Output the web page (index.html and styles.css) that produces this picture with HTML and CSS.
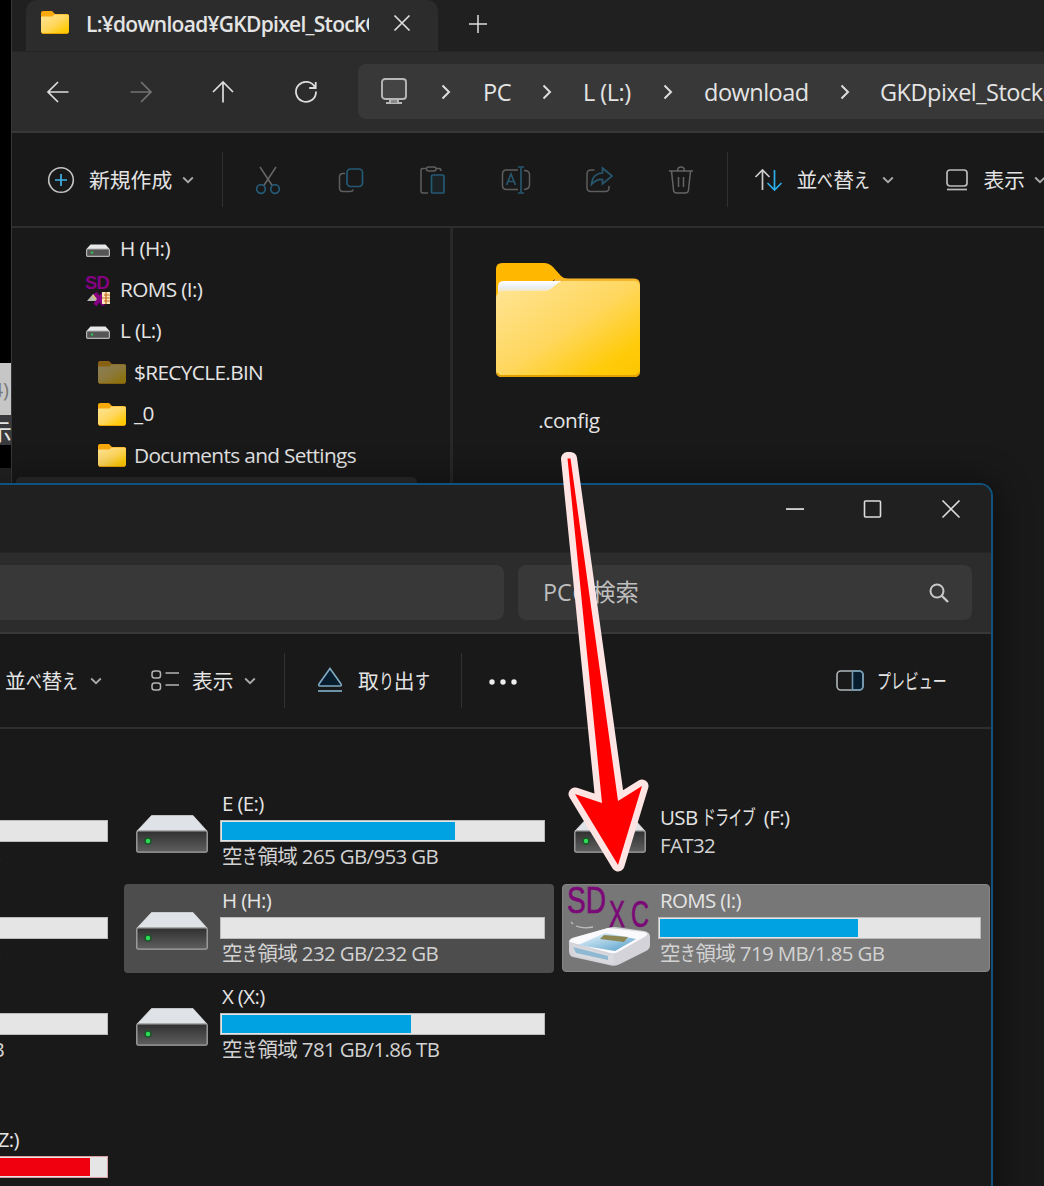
FILE: index.html
```html
<!DOCTYPE html>
<html lang="ja">
<head>
<meta charset="utf-8">
<title>エクスプローラー</title>
<link rel="stylesheet" href="styles.css">
</head>
<body>
<svg class="defs" width="0" height="0">
  <defs>
    <linearGradient id="gold" x1="0" y1="0" x2="1" y2="1"><stop offset="0" stop-color="#ffe597"/><stop offset=".5" stop-color="#ffd75e"/><stop offset=".82" stop-color="#ffcb0a"/><stop offset="1" stop-color="#fdc500"/></linearGradient>
    <linearGradient id="sheet" x1="0" y1="0" x2="0" y2="1"><stop offset="0" stop-color="#fff"/><stop offset=".45" stop-color="#e9edf3"/><stop offset="1" stop-color="#ffe597"/></linearGradient>
    <linearGradient id="metal" x1="0" y1="0" x2="0" y2="1"><stop offset="0" stop-color="#303030"/><stop offset="1" stop-color="#5f5f5f"/></linearGradient>
    <linearGradient id="glass" x1="0" y1="0" x2="1" y2="1"><stop offset="0" stop-color="#f4fbff"/><stop offset="1" stop-color="#4f9cc8"/></linearGradient>
  </defs>
  <symbol id="chevron-down" viewBox="0 0 12 8"><path d="M1.2 1.5 6 6.2l4.8-4.7" fill="none" stroke="#aaa" stroke-width="1.8"/></symbol>
  <symbol id="chevron-right" viewBox="0 0 10 16"><path d="M1.5 1.5 8 8l-6.500 6.500" fill="none" stroke="#ddd" stroke-width="2"/></symbol>
  <symbol id="folder" viewBox="0 0 28 23"><path d="M0 2q0-2 2-2h9l3 3h12q2 0 2 2v14H0z" fill="#f9a90c"/><path d="M0 6.500q0-1 1-1h10.500l2-2H26.500q1.500 0 1.500 1.500V20.500q0 2-2 2H2q-2 0-2-2z" fill="url(#gold)"/><path d="M.5 21.500q.5 1 1.500 1h24q1 0 1.500-1" stroke="#e8a200" fill="none"/></symbol>
  <symbol id="drive" viewBox="0 0 72 38"><path d="M15.500.5h41.500L71 16H1z" fill="#dfe2e6" stroke="#f2f3f4" stroke-width=".6"/><rect x=".8" y="15.800" width="70.400" height="21.400" rx="1.500" fill="url(#metal)" stroke="#a6a6a6" stroke-width="1.300"/><circle cx="12" cy="26" r="4" fill="#0b5c20" opacity=".6"/><circle cx="12" cy="26" r="2.200" fill="#2ce055"/></symbol>
  <symbol id="drive-small" viewBox="0 0 24 13"><path d="M4.500.5h15L23.500 5H.5z" fill="#e6e8ea"/><rect x=".6" y="5" width="22.800" height="7.300" rx="1" fill="#555" stroke="#b4b4b4" stroke-width="1.200"/><circle cx="6" cy="8.500" r="1.300" fill="#31bd54"/></symbol>
  <symbol id="sort" viewBox="0 0 30 24"><path d="M8.500 22V2M1.500 9l7-7 7 7" fill="none" stroke="#ccc" stroke-width="1.700"/></symbol>
</svg>

<div class="desktop">
  <aside class="behind">
    <div class="behind-light">4)</div>
    <div class="behind-dark">示</div>
    <div class="behind-foot"></div>
  </aside>

  <section class="window window-back">
    <header class="tabstrip">
      <div class="tab">
        <svg class="i-folder"><use href="#folder"/></svg>
        <span class="tab-title">L:¥download¥GKDpixel_StockOS</span>
        <svg class="tab-close" width="18" height="18"><path d="M1.500 1.500l15 15M16.500 1.500l-15 15" stroke="#ddd" stroke-width="1.700"/></svg>
      </div>
      <svg class="tab-add" width="20" height="20"><path d="M10 1v18M1 10h18" stroke="#ddd" stroke-width="1.500"/></svg>
    </header>
    <nav class="navbar">
      <div class="nav-buttons">
        <svg width="24" height="24"><path d="M22.500 12H2M12 2 2 12l10 10" fill="none" stroke="#ddd" stroke-width="1.700"/></svg>
        <svg width="24" height="24"><path d="M1.500 12H22M12 2l10 10-10 10" fill="none" stroke="#727272" stroke-width="1.700"/></svg>
        <svg width="24" height="24"><path d="M12 22.500V2M2 12 12 2l10 10" fill="none" stroke="#ddd" stroke-width="1.700"/></svg>
        <svg width="24" height="24"><path d="M21 7.500A10 10 0 1 0 22 11.500M21.700 2v6h-6.500" fill="none" stroke="#ddd" stroke-width="1.800"/></svg>
      </div>
      <div class="address">
        <svg class="monitor" width="28" height="28"><rect x="2" y="1" width="24" height="20" rx="3" fill="#444" stroke="#b8b8b8" stroke-width="1.900"/><path d="M10 21v4M18 21v4M6 25h16" stroke="#b8b8b8" stroke-width="2"/><path d="M11 22h6v3h-6z" fill="#888"/></svg>
        <svg class="crumb-sep"><use href="#chevron-right"/></svg>
        <span class="crumb crumb-pc">PC</span>
        <svg class="crumb-sep"><use href="#chevron-right"/></svg>
        <span class="crumb crumb-drive">L (L:)</span>
        <svg class="crumb-sep"><use href="#chevron-right"/></svg>
        <span class="crumb crumb-dir">download</span>
        <svg class="crumb-sep"><use href="#chevron-right"/></svg>
        <span class="crumb crumb-last">GKDpixel_StockOS</span>
      </div>
    </nav>
    <div class="toolbar">
      <svg class="new-icon" width="28" height="28"><circle cx="14" cy="14" r="12.300" fill="none" stroke="#c4c4c4" stroke-width="1.600"/><path d="M14 8v12M8 14h12" stroke="#42b3ea" stroke-width="1.700"/></svg>
      <span class="label new-label">新規作成</span>
      <svg class="caret"><use href="#chevron-down"/></svg>
      <i class="sep sep-new"></i>
      <div class="actions">
        <svg width="28" height="30"><path d="M6 2l12.500 19M22 2 9.500 21" stroke="#666" stroke-width="1.500"/><g fill="none" stroke="#245a76" stroke-width="1.700"><circle cx="7" cy="24" r="4.300"/><circle cx="21" cy="24" r="4.300"/></g></svg>
        <svg width="28" height="30"><path d="M8 8.500H6q-3.500 0-3.500 3.500v11q0 3.500 3.500 3.500h7q3 0 3-2" fill="none" stroke="#5e5e5e" stroke-width="1.500"/><rect x="10" y="4" width="15.500" height="17.500" rx="3.500" fill="none" stroke="#245a76" stroke-width="1.700"/></svg>
        <svg width="28" height="30"><path d="M9 28H4q-2 0-2-2V5q0-1.500 2-1.500h3.500M17 3.500h3q2 0 2 2.500" fill="none" stroke="#5e5e5e" stroke-width="1.500"/><rect x="7.500" y="2" width="9.500" height="4" rx="2" fill="none" stroke="#5e5e5e" stroke-width="1.400"/><rect x="12.500" y="10" width="12.500" height="18" rx="1" fill="#1b2326" stroke="#245a76" stroke-width="1.700"/></svg>
        <svg width="30" height="30"><path d="M17 5H5.500Q1.500 5 1.500 9v11.500q0 4 4 4H17M23 5.500q5.500 0 5.500 4V20q0 4-5.500 4.500" fill="none" stroke="#5e5e5e" stroke-width="1.500"/><path d="M17 2h6M17 28h6M20 2v26M5.500 20l4.500-11 4.500 11M7.500 16.500h5" fill="none" stroke="#27566d" stroke-width="1.700"/></svg>
        <svg width="28" height="30"><path d="M9.500 5H6Q2 5 2 9v13.500q0 4 4 4h14.500q3.500 0 3.500-4v-1.500" fill="none" stroke="#5e5e5e" stroke-width="1.500"/><path d="M17.500 3 27 11l-9.500 8v-4.500q-6-.5-11 5Q7.500 8.500 17.500 8z" fill="none" stroke="#27566d" stroke-width="1.700"/></svg>
        <svg width="28" height="30"><path d="M2 6h24M10.500 6q0-4 3.500-4t3.500 4M4.500 6l2 19q.3 3 3 3h9q2.700 0 3-3l2-19M11.500 12v10M16.500 12v10" fill="none" stroke="#646464" stroke-width="1.500"/></svg>
      </div>
      <i class="sep sep-sort"></i>
      <svg class="sort-icon" width="30" height="24"><use href="#sort"/><path d="M20.500 2v20M13.500 15l7 7 7-7" fill="none" stroke="#2caeea" stroke-width="1.700"/></svg>
      <span class="label sort-label">並<b class="kana">べ</b>替<b class="kana">え</b></span>
      <svg class="caret"><use href="#chevron-down"/></svg>
      <svg class="view-icon" width="24" height="24"><rect x="2" y="2" width="20" height="16" rx="3" fill="none" stroke="#bbb" stroke-width="1.700"/><path d="M2 21.500h20" stroke="#bbb" stroke-width="1.700"/></svg>
      <span class="label view-label">表示</span>
      <svg class="caret"><use href="#chevron-down"/></svg>
    </div>
    <div class="body">
      <ul class="tree">
        <li><svg class="i-small"><use href="#drive-small"/></svg><span>H (H:)</span></li>
        <li><svg class="i-sd" width="26" height="30"><text class="sd-mini" x="-1" y="14" textLength="24" lengthAdjust="spacingAndGlyphs">SD</text><path d="M1 26l6-7h5l2 7z" fill="#b9bbae"/><path d="M6 20h7v4H8z" fill="#d8c477"/><path d="M9 18l9 12M18 18 9 30" stroke="#850083" stroke-width="4"/><path d="M16 17h8v12h-8z" fill="#ffe6bb"/><path d="M18 20h6M16 23h8M18 26h6M20 17v12" stroke="#c16a22" stroke-width="1.200"/></svg><span>ROMS (I:)</span></li>
        <li><svg class="i-small"><use href="#drive-small"/></svg><span>L (L:)</span></li>
        <li class="child"><svg class="i-folder dim"><use href="#folder"/></svg><span>$RECYCLE.BIN</span></li>
        <li class="child"><svg class="i-folder"><use href="#folder"/></svg><span>_0</span></li>
        <li class="child"><svg class="i-folder"><use href="#folder"/></svg><span>Documents and Settings</span></li>
        <li class="current"></li>
      </ul>
      <main class="files">
        <figure class="file">
          <svg width="146" height="116" viewBox="0 0 146 116"><path d="M1 34V6q0-6 6-6h42q5 0 9 4l8 9q3 3 7 3H60L40 34z" fill="#ffb700"/><path d="M60 15.500h79q6 0 6 6V40H50z" fill="#f5b62c"/><path d="M3 32V24q0-6 5-6h58v8l-6 6z" fill="url(#sheet)"/><path d="M1 36q0-8 8-8h40q5 0 8-3l6-5q3-2 6-2h70q6 0 6 6v84q0 6-6 6H7q-6 0-6-6z" fill="url(#gold)"/><path d="M2 110q1 3 5 3h132q4 0 5-3" fill="none" stroke="#e0a100" stroke-width="1.800"/></svg>
          <figcaption>.config</figcaption>
        </figure>
      </main>
    </div>
  </section>

  <section class="window window-front">
    <header class="titlebar">
      <svg width="20" height="20"><path d="M1 10h18" stroke="#eee" stroke-width="1.700"/></svg>
      <svg width="20" height="20"><rect x="1.500" y="2" width="16" height="16" rx="1" fill="none" stroke="#ddd" stroke-width="1.600"/></svg>
      <svg width="20" height="20"><path d="M1.500 1.500l17 17M18.500 1.500l-17 17" stroke="#ddd" stroke-width="1.600"/></svg>
    </header>
    <nav class="navbar">
      <div class="address address-cut"></div>
      <div class="search"><span class="search-text">PC<b class="kana">の</b>検索</span>
        <svg width="22" height="22"><circle cx="9" cy="9" r="6.500" fill="none" stroke="#c8c8c8" stroke-width="2"/><path d="M13.500 13.500l6.500 6.500" stroke="#c8c8c8" stroke-width="2.400"/></svg>
      </div>
    </nav>
    <div class="toolbar">
      <span class="label sort-label-front">並<b class="kana">べ</b>替<b class="kana">え</b></span>
      <svg class="caret"><use href="#chevron-down"/></svg>
      <svg class="list-icon" width="28" height="24"><g fill="none" stroke="#b4b4b4" stroke-width="1.500"><rect x="1" y="2" width="8.500" height="7" rx="2.500"/><rect x="1" y="14" width="8.500" height="7" rx="2.500"/><path d="M14.500 4H28M14.500 16H28" stroke-width="1.700"/></g></svg>
      <span class="label view-label-front">表示</span>
      <svg class="caret"><use href="#chevron-down"/></svg>
      <i class="sep sep-eject"></i>
      <svg class="eject-icon" width="26" height="28"><path d="M13 1.500 24 17q1 2-1 2H3q-2 0-1-2z" fill="#071d2d" stroke="#7faac3" stroke-width="1.600"/><path d="M1 24h24" stroke="#7faac3" stroke-width="1.700"/></svg>
      <span class="label eject-label">取<b class="kana">り</b>出<b class="kana">す</b></span>
      <i class="sep sep-more"></i>
      <svg class="more-icon" width="30" height="8"><g fill="#eee"><circle cx="4" cy="5" r="2.700"/><circle cx="15" cy="5" r="2.700"/><circle cx="26" cy="5" r="2.700"/></g></svg>
      <svg class="preview-icon" width="28" height="22"><path d="M16 1h7q4 0 4 4v12q0 4-4 4h-7z" fill="#071d2d"/><rect x="1" y="1" width="26" height="19" rx="4" fill="none" stroke="#b0b6ba" stroke-width="1.600"/><path d="M16.500 1H23q4 0 4 4v11q0 4-4 4h-6.500z" fill="none" stroke="#7099b1" stroke-width="1.600"/></svg>
      <span class="label preview-label"><b class="kana-run">プレビュー</b></span>
    </div>
    <div class="drives">
      <div class="drive cut"><div class="meter"></div><small>GB</small></div>
      <div class="drive"><svg class="i-drive"><use href="#drive"/></svg><div class="info"><span>E (E:)</span><div class="meter"><i style="width:72.5%"></i></div><small>空<b class="kana">き</b>領域 265 GB/953 GB</small></div></div>
      <div class="drive"><svg class="i-drive"><use href="#drive"/></svg><div class="info plain"><span>USB <b class="kana-run usb">ドライブ</b> (F:)</span><small>FAT32</small></div></div>
      <div class="drive cut"><div class="meter"></div><small>GB</small></div>
      <div class="drive hovered"><svg class="i-drive"><use href="#drive"/></svg><div class="info"><span>H (H:)</span><div class="meter"></div><small>空<b class="kana">き</b>領域 232 GB/232 GB</small></div></div>
      <div class="drive selected">
        <svg class="i-sdxc" width="87" height="86"><g class="sdxc-text"><text x="4" y="28" textLength="39" lengthAdjust="spacingAndGlyphs">SD</text><text x="46" y="42" textLength="16" lengthAdjust="spacingAndGlyphs">X</text><text x="68" y="42" textLength="18" lengthAdjust="spacingAndGlyphs">C</text></g><path d="M8 37l2 2M13 41q8 3 17 1" stroke="#ddd" stroke-width="1.300" fill="none" opacity=".7"/><path d="M6 58q-1-3 3-5l36-10q4-1 7-1l29 4q6 1 6 6v8q0 4-4 6L57 79q-5 3-11 1L10 72q-4-1-4-6z" fill="#d3d3d9"/><path d="M7 57q-1-2 3-4l35-10 36 4q5 1 2 4L55 67q-3 2-8 1z" fill="#fafafd"/><path d="M15 60l27-12 31 6-21 12z" fill="url(#glass)"/><path d="M41 50l24 2-4 5-24-3z" fill="#8c8653"/><path d="M9 60l38 10 4-2v10l-4 1-36-9z" fill="#d8dade"/><path d="M10 62l35 9v4l-32-7z" fill="#8fb8d2"/></svg>
        <div class="info"><span>ROMS (I:)</span><div class="meter"><i style="width:62%"></i></div><small>空<b class="kana">き</b>領域 719 MB/1.85 GB</small></div></div>
      <div class="drive cut shifted"><div class="meter"></div><small>GB</small></div>
      <div class="drive"><svg class="i-drive"><use href="#drive"/></svg><div class="info"><span>X (X:)</span><div class="meter"><i style="width:59%"></i></div><small>空<b class="kana">き</b>領域 781 GB/1.86 TB</small></div></div>
      <div class="drive cut network"><span>(Z:)</span><div class="meter full"><i style="width:95%"></i></div></div>
    </div>
  </section>

  <svg class="arrow" width="100" height="430" viewBox="560 445 100 430"><path d="M567.500 458.500h3L618 801l24-15-24 79-43-71 27 9z"/></svg>
</div>
</body>
</html>
```
FILE: styles.css
```css
* { box-sizing: border-box; }
body { margin: 0; background: #000; font-family: "Open Sans", "Noto Sans CJK JP", sans-serif; color: #e4e4e4; }
svg { display: block; flex: none; overflow: visible; }
b { font-weight: inherit; }
.defs { position: absolute; }
.desktop { position: relative; width: 1044px; height: 1186px; overflow: hidden; background: #000; }

.behind { width: 12px; padding-top: 363px; }
.behind-light { display: flex; justify-content: flex-end; align-items: center; height: 52px; overflow: hidden; background: #c6c6c6; color: #777; font-size: 20px; padding-right: 3px; }
.behind-dark { display: flex; justify-content: flex-end; align-items: center; height: 30px; overflow: hidden; background: #383a3d; font-size: 24px; }
.behind-foot { height: 20px; margin-top: 23px; background: #222; }

.window { position: absolute; background: #191919; overflow: hidden; }
.window-back { left: 11px; top: 0; width: 1040px; height: 1200px; border-left: 1px solid #373737; }
.window-front { left: 0; top: 483px; width: 993px; height: 720px; border: 2px solid #0f5280; border-left: 0; border-radius: 0 13px 0 0; box-shadow: 0 2px 34px 4px rgba(0,0,0,.45); }

.tabstrip { display: flex; align-items: flex-start; height: 51px; background: #202020; }
.tab { display: flex; align-items: flex-start; width: 412px; height: 51px; margin-left: 14px; padding: 11px 0 0 15px; background: #2c2c2c; border-radius: 11px 11px 0 0; }
.i-folder { width: 28px; height: 23px; }
.tab-title { width: 283px; margin: -3px 24px 0 17px; overflow: hidden; white-space: nowrap; font-size: 21px; line-height: 32px; font-weight: 600; letter-spacing: -.72px; }
.tab-close { margin-top: 3px; }
.tab-add { margin: 14px 0 0 30px; }

.navbar { display: flex; align-items: center; height: 82px; background: #2c2c2c; border-top: 1px solid #252525; border-bottom: 2px solid #383838; }
.nav-buttons { display: grid; grid-template-columns: repeat(4, 82.5px); justify-items: center; padding-left: 5px; margin-right: 11px; }
.address { display: flex; align-items: center; height: 55px; background: #383838; border-radius: 8px; }
.window-back .address { width: 800px; }
.monitor { margin: 0 22px; }
.crumb-sep { width: 10px; height: 16px; margin: 0 11px; }
.crumb { white-space: nowrap; font-size: 23.500px; letter-spacing: -.5px; }
.crumb-pc { width: 69px; padding-left: 21px; }
.crumb-drive { width: 89px; padding-left: 20px; }
.crumb-dir { width: 145px; padding-left: 20px; }
.crumb-last { padding-left: 19px; }

.toolbar { display: flex; align-items: center; height: 95px; border-bottom: 2px solid #2e2e2e; white-space: nowrap; }
.label { margin-top: -2px; font-family: "Noto Sans CJK JP", sans-serif; font-size: 20.800px; line-height: 30px; }
.kana { display: inline-block; width: .76em; transform: scaleX(.76); transform-origin: 0 50%; }
.kana-run { display: inline-block; width: 70px; transform: scaleX(.67); transform-origin: 0 50%; }
.kana-run.usb { width: 57px; }
.caret { width: 12px; height: 8px; }
.sep { width: 1px; height: 55px; background: #303030; }
.new-icon { margin-left: 35px; }
.new-label { width: 93px; margin-left: 14px; }
.sep-new { margin: 0 4px 0 28px; }
.actions { display: grid; grid-template-columns: repeat(6, 82.600px); justify-items: center; align-items: center; }
.sep-sort { margin: 0 26px 0 4px; }
.sort-label { width: 85px; margin-left: 13px; }
.view-icon { margin-left: 51px; }
.view-label { width: 50px; margin-left: 15px; }

.body { display: flex; height: 372px; }
.tree { flex: none; width: 441px; margin: 0; padding: 0; list-style: none; border-right: 3px solid #282828; }
.tree li { display: flex; align-items: center; height: 41.400px; padding-left: 74px; font-size: 20.800px; letter-spacing: -.65px; white-space: nowrap; }
.tree li span { margin-top: -2px; }
.tree li.child { padding-left: 86px; }
.tree .current { width: 401px; margin: 1px 0 0 4px; background: #2b2b2b; border-radius: 5px; }
.i-small { width: 24px; height: 13px; margin: 3px 10px 0 0; }
.i-sd { margin-right: 8px; }
.sd-mini { font: 700 18px "Liberation Sans", sans-serif; fill: #850083; }
.tree .i-folder { margin-right: 8px; }
.dim { opacity: .5; }
.files { padding: 35px 0 0 42px; }
.file { width: 148px; margin: 0; text-align: center; }
.file figcaption { margin-top: 26px; font-size: 20.800px; line-height: 30px; letter-spacing: -.4px; }

.titlebar { display: flex; justify-content: flex-end; gap: 58px; height: 67px; padding: 14px 30px 0 0; background: #202020; }
.address-cut { width: 504px; border-radius: 0 8px 8px 0; }
.search { display: flex; align-items: center; justify-content: space-between; width: 454px; height: 55px; margin-left: 14px; padding: 0 22px 0 25px; background: #383838; border-radius: 8px; color: #bebebe; font-size: 23.300px; white-space: nowrap; }
.search-text { margin-top: -4px; }
.search .kana { width: .88em; transform: scaleX(.86); }
.sort-label-front { width: 85px; margin-left: 5px; }
.list-icon { margin-left: 49px; }
.view-label-front { width: 52px; margin-left: 13px; }
.sep-eject { margin: 0 32px 0 28px; }
.eject-label { width: 73px; margin-left: 15px; }
.eject-label .kana { width: .72em; transform: scaleX(.72); }
.sep-more { margin: 0 26px 0 30px; }
.preview-icon { margin-left: auto; }
.preview-label { width: 114px; margin-left: 13px; }

.drives { display: grid; grid-template-columns: 430px 430px 428px; grid-template-rows: 89px 89px 89px 89px; column-gap: 8px; row-gap: 7.500px; width: 1304px; margin: 58px 0 0 -314px; }
.drive { display: flex; height: 89px; padding: 0 8px 0 12px; border-radius: 4px; }
.i-drive { width: 72px; height: 38px; margin: 28px 12px 0 0; }
.info { display: flex; flex-direction: column; width: 325px; white-space: nowrap; }
.drive span, .drive small { height: 28px; padding-left: 2px; font-size: 20.500px; line-height: 28px; letter-spacing: -.65px; }
.drive span { margin: 2px 0 3px; }
.meter { flex: none; height: 22px; padding: 1px; border: 1px solid #bbb; background: #e5e5e5; }
.meter i { display: block; height: 100%; margin: 0; background: #00a2e2; }
.drive small { color: #d2d2d2; }
.plain { padding-top: 14px; }
.plain span { margin-bottom: 0; }
.selected { padding-left: 0; background: #777; border: 1px solid #858585; height: 88px; }
.selected .info { margin: -1px 0 0 8px; width: 325px; }
.hovered { background: #4d4d4d; }
.sdxc-text { font: 400 36px "Liberation Sans", sans-serif; fill: #7a0876; stroke: #7a0876; stroke-width: .7px; }
.cut { flex-direction: column; padding: 33px 8px 0 97px; }
.cut small { width: 217px; text-align: right; }
.cut.shifted small { width: 221px; }
.network { grid-column: 1; padding-top: 51px; height: 115px; }
.network span { width: 236px; margin: -3px 0 3px; text-align: right; }
.full { border-color: #d8a0a0; }
.full i { background: #f0000f; }

.arrow { position: absolute; left: 560px; top: 445px; }
.arrow path { fill: #f00; stroke: #ffe4e4; stroke-width: 13px; stroke-linejoin: round; paint-order: stroke; }
```
